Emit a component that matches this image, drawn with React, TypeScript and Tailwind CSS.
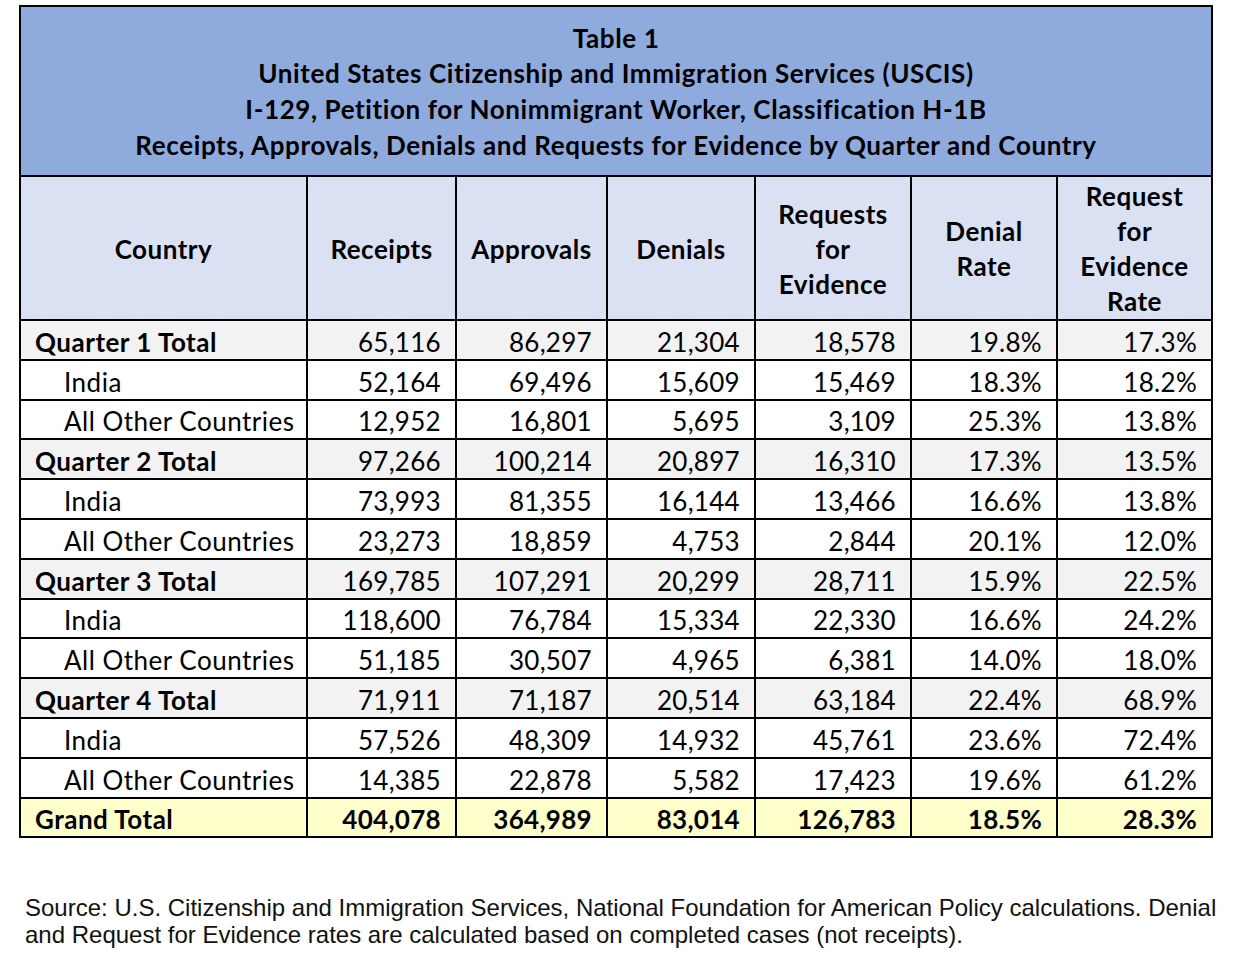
import React from "react";

type Row = { label: string; kind: "total" | "sub" | "grand"; vals: string[] };

const rows: Row[] = [
  { label: "Quarter 1 Total", kind: "total", vals: ["65,116", "86,297", "21,304", "18,578", "19.8%", "17.3%"] },
  { label: "India", kind: "sub", vals: ["52,164", "69,496", "15,609", "15,469", "18.3%", "18.2%"] },
  { label: "All Other Countries", kind: "sub", vals: ["12,952", "16,801", "5,695", "3,109", "25.3%", "13.8%"] },
  { label: "Quarter 2 Total", kind: "total", vals: ["97,266", "100,214", "20,897", "16,310", "17.3%", "13.5%"] },
  { label: "India", kind: "sub", vals: ["73,993", "81,355", "16,144", "13,466", "16.6%", "13.8%"] },
  { label: "All Other Countries", kind: "sub", vals: ["23,273", "18,859", "4,753", "2,844", "20.1%", "12.0%"] },
  { label: "Quarter 3 Total", kind: "total", vals: ["169,785", "107,291", "20,299", "28,711", "15.9%", "22.5%"] },
  { label: "India", kind: "sub", vals: ["118,600", "76,784", "15,334", "22,330", "16.6%", "24.2%"] },
  { label: "All Other Countries", kind: "sub", vals: ["51,185", "30,507", "4,965", "6,381", "14.0%", "18.0%"] },
  { label: "Quarter 4 Total", kind: "total", vals: ["71,911", "71,187", "20,514", "63,184", "22.4%", "68.9%"] },
  { label: "India", kind: "sub", vals: ["57,526", "48,309", "14,932", "45,761", "23.6%", "72.4%"] },
  { label: "All Other Countries", kind: "sub", vals: ["14,385", "22,878", "5,582", "17,423", "19.6%", "61.2%"] },
  { label: "Grand Total", kind: "grand", vals: ["404,078", "364,989", "83,014", "126,783", "18.5%", "28.3%"] },
];

const headers: string[][] = [
  ["Country"],
  ["Receipts"],
  ["Approvals"],
  ["Denials"],
  ["Requests", "for", "Evidence"],
  ["Denial", "Rate"],
  ["Request", "for", "Evidence", "Rate"],
];

export default function App() {
  return (
    <div className="min-h-[968px] w-[1236px] bg-white text-black" style={{ fontFamily: "Lato, 'Noto Sans', sans-serif" }}>
      <div className="pl-[19px] pt-[5px]">
        <table className="table-fixed border-collapse border-2 border-black w-[1192px]">
          <colgroup>
            <col className="w-[287px]" />
            <col className="w-[149px]" />
            <col className="w-[151px]" />
            <col className="w-[148px]" />
            <col className="w-[156px]" />
            <col className="w-[146px]" />
            <col className="w-[155px]" />
          </colgroup>
          <thead>
            <tr>
              <th colSpan={7} className="border-2 border-black bg-[#8faadc] h-[170px] pt-[5px] pb-[3px] text-center font-bold text-[26px] tracking-[0.6px] leading-[35.6px]">
                <div>Table 1</div>
                <div>United States Citizenship and Immigration Services (USCIS)</div>
                <div>I-129, Petition for Nonimmigrant Worker, Classification H-1B</div>
                <div>Receipts, Approvals, Denials and Requests for Evidence by Quarter and Country</div>
              </th>
            </tr>
            <tr>
              {headers.map((h, i) => (
                <th key={i} className="border-2 border-black bg-[#dae1f2] h-[144px] p-0 pt-[2px] text-center align-middle font-bold text-[26px] tracking-[0.5px] leading-[35px]">
                  {h.map((l, j) => (
                    <div key={j}>{l}</div>
                  ))}
                </th>
              ))}
            </tr>
          </thead>
          <tbody>
            {rows.map((r, i) => {
              const bg = r.kind === "total" ? "bg-[#f2f2f2]" : r.kind === "grand" ? "bg-[#ffffcc]" : "bg-white";
              const labelBold = r.kind === "sub" ? "font-normal" : "font-bold";
              const numBold = r.kind === "grand" ? "font-bold" : "font-normal";
              return (
                <tr key={i} className={bg}>
                  <td className={`border-2 border-black h-[39.8px] p-0 pt-[4px] text-[26px] tracking-[0.5px] leading-none ${labelBold} ${r.kind === "sub" ? "pl-[43px]" : "pl-[14px]"}`}>
                    {r.label}
                  </td>
                  {r.vals.map((v, j) => (
                    <td key={j} className={`border-2 border-black h-[39.8px] p-0 pt-[4px] pr-[14px] text-right text-[26px] tracking-[0.3px] leading-none ${numBold}`}>
                      {v}
                    </td>
                  ))}
                </tr>
              );
            })}
          </tbody>
        </table>
      </div>
      <div
        className="pl-[25px] pt-[56px] pr-[16px] text-[24px] leading-[27px] text-[#111]"
        style={{ fontFamily: "'Liberation Sans', Arial, sans-serif" }}
      >
        Source: U.S. Citizenship and Immigration Services, National Foundation for American Policy calculations. Denial and Request for Evidence rates are calculated based on completed cases (not receipts).
      </div>
    </div>
  );
}
